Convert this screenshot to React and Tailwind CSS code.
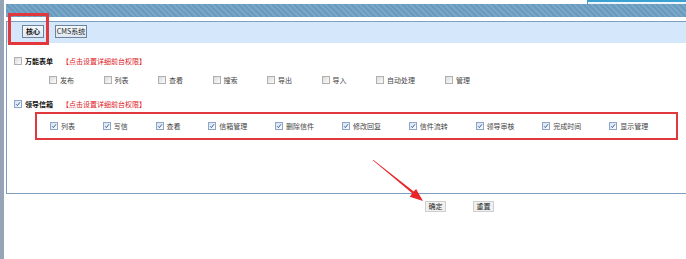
import React from 'react';

const Box = ({ checked }) => (
    <svg width="8" height="8" viewBox="0 0 8 8" className="shrink-0">
        <defs>
            <linearGradient id={checked ? 'gc' : 'gu'} x1="0" y1="0" x2="1" y2="1">
                <stop offset="0" stopColor={checked ? '#d3e0f1' : '#d8d8d8'} />
                <stop offset="1" stopColor="#ffffff" />
            </linearGradient>
        </defs>
        <rect x="0.5" y="0.5" width="7" height="7" fill={`url(#${checked ? 'gc' : 'gu'})`} stroke={checked ? '#8ca5c8' : '#b0b0b0'} />
        {checked && <path d="M2.2 4.3 L3.4 5.6 L5.9 2.3" fill="none" stroke="#2d4c92" strokeWidth="0.9" />}
    </svg>
);

const Item = ({ label, checked, wide }) => (
    <div className={`flex items-center gap-[3px] ${wide ? 'w-[69px]' : 'w-[54.5px]'}`}>
        <Box checked={checked} />
        <span className="text-[7px] leading-none text-[#444]">{label}</span>
    </div>
);

const formItems = ['发布', '列表', '查看', '搜索', '导出', '导入', '自动处理', '管理'];
const mailItems = ['列表', '写信', '查看', '信箱管理', '删除信件', '修改回复', '信件流转', '领导审核', '完成时间', '显示管理'];

const App = () => {
    return (
        <div className="relative w-[686px] h-[259px] bg-white flex overflow-hidden font-['Noto_Sans_CJK_SC','Liberation_Sans',sans-serif]">
            <div className="w-[4px] h-full bg-[#96a4b6]" />
            <div className="w-[2px] h-full" />
            <div className="flex-1 flex flex-col">
                {/* top strip */}
                <div className="h-[4px] flex">
                    <div className="flex-1" />
                    <div className="w-[99px] border-t-2 border-l border-[#3aa2d2] bg-[#eef6fb]" />
                </div>
                <div className="h-[13px] bg-[repeating-linear-gradient(45deg,#6a9bbe_0px,#6a9bbe_2px,#79a7c7_2px,#79a7c7_4px)]" />
                <div className="h-[4px]" />

                {/* panel */}
                <div className="h-[173px] border-t border-l border-b border-[#7f9fc2] flex flex-col">
                    <div className="h-[21px] bg-[#d5e8fb] flex items-start pt-[3px] pl-[15px] gap-[11px]">
                        <button className="w-[22px] h-[13px] border border-[#6f829c] bg-[linear-gradient(#f4f8fc,#dfe8f2)] text-[7px] font-bold leading-none text-[#111]">
                            核心
                        </button>
                        <button className="w-[32px] h-[13px] border border-[#6f829c] bg-[linear-gradient(#f4f8fc,#dfe8f2)] text-[7px] leading-none text-[#222]">
                            CMS系统
                        </button>
                    </div>

                    <div className="flex flex-col pt-[12px]">
                        <div className="h-[12px] flex items-center pl-[7px] gap-[3px]">
                            <Box />
                            <span className="text-[7px] font-bold leading-none text-[#111] w-[34px]">万能表单</span>
                            <span className="text-[7px] leading-none text-[#e0201e]">【点击设置详细前台权限】</span>
                        </div>
                        <div className="h-[12px] mt-[7px] flex items-center pl-[42px]">
                            {formItems.map((t) => (
                                <Item key={t} label={t} wide={t.length > 2} />
                            ))}
                        </div>
                        <div className="h-[12px] mt-[12px] flex items-center pl-[7px] gap-[3px]">
                            <Box checked />
                            <span className="text-[7px] font-bold leading-none text-[#111] w-[34px]">领导信箱</span>
                            <span className="text-[7px] leading-none text-[#e0201e]">【点击设置详细前台权限】</span>
                        </div>
                        <div className="h-[28px] w-[643px] mt-[2px] ml-[28px] border-2 border-[#e0383c] flex items-center pl-[13px]">
                            {mailItems.map((t) => (
                                <Item key={t} label={t} checked wide={t.length > 2} />
                            ))}
                        </div>
                    </div>
                </div>

                {/* bottom buttons */}
                <div className="flex mt-[7px] pl-[419px] gap-[27px]">
                    <button className="w-[21px] h-[11px] border border-[#cfcfcf] bg-[#f0f0f0] text-[7px] leading-none text-[#222]">确定</button>
                    <button className="w-[21px] h-[11px] border border-[#cfcfcf] bg-[#f0f0f0] text-[7px] leading-none text-[#222]">重置</button>
                </div>
            </div>

            {/* annotation: highlight around first tab */}
            <div className="absolute left-[8px] top-[13px] w-[41px] h-[32px] border-[3px] border-[#e2383b]" />

            {/* annotation arrow */}
            <svg className="absolute left-0 top-0 pointer-events-none" width="686" height="259">
                <polygon
                    points="372.8,160.3 373.2,159.7 413.7,191.4 416.12,188.89 423,201 409.78,196.63 412.2,193.3"
                    fill="#e8262a"
                />
            </svg>
        </div>
    );
};

export default App;
